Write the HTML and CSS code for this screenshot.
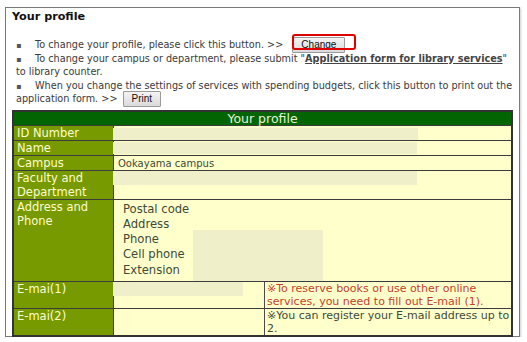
FILE: index.html
```html
<!DOCTYPE html>
<html lang="en">
<head>
    <meta charset="UTF-8">
    <title>Your profile</title>
    <link rel="stylesheet" href="styles.css">
</head>
<body>
    <div class="frame">
        <div class="title">Your profile</div>

        <!-- Notes above the table -->
        <div class="notes">
            <p><span class="bullet">▪</span>To change your profile, please click this button. &gt;&gt; <span class="change-wrap"><button class="btn">Change</button></span></p>
            <p><span class="bullet">▪</span>To change your campus or department, please submit "<a href="#" class="form-link">Application form for library services</a>" to library counter.</p>
            <p><span class="bullet">▪</span>When you change the settings of services with spending budgets, click this button to print out the application form. &gt;&gt; <button class="btn print">Print</button></p>
        </div>

        <!-- Profile table -->
        <div class="profile-wrap">
            <table class="profile">
                <colgroup>
                    <col class="c-label">
                    <col class="c-value">
                    <col class="c-note">
                </colgroup>
                <tr class="r-head"><th colspan="3">Your profile</th></tr>
                <tr class="r-id"><td class="label">ID Number</td><td class="value" colspan="2"></td></tr>
                <tr class="r-name"><td class="label">Name</td><td class="value" colspan="2"></td></tr>
                <tr class="r-campus"><td class="label">Campus</td><td class="value campus" colspan="2">Ookayama campus</td></tr>
                <tr class="r-faculty"><td class="label">Faculty and<br>Department</td><td class="value" colspan="2"></td></tr>
                <tr class="r-address">
                    <td class="label">Address and<br>Phone</td>
                    <td class="value" colspan="2">
                        <ul class="addr-list">
                            <li>Postal code</li>
                            <li>Address</li>
                            <li>Phone</li>
                            <li>Cell phone</li>
                            <li>Extension</li>
                        </ul>
                    </td>
                </tr>
                <tr class="r-mail1"><td class="label">E-mai(1)</td><td class="value mail"></td><td class="note warn">※To reserve books or use other online services, you need to fill out E-mail (1).</td></tr>
                <tr class="r-mail2"><td class="label">E-mai(2)</td><td class="value mail"></td><td class="note">※You can register your E-mail address up to 2.</td></tr>
            </table>

            <!-- hidden personal data -->
            <div class="mask m-id"></div>
            <div class="mask m-name"></div>
            <div class="mask m-faculty"></div>
            <div class="mask m-address"></div>
            <div class="mask m-mail"></div>
        </div>
    </div>
</body>
</html>
```

FILE: styles.css
```css
body {
    margin: 0;
    background: #ffffff;
    font-family: "DejaVu Sans", Verdana, sans-serif;
    color: #333333;
}

.frame {
    margin: 7px 0 0 5px;
    width: 501px;
    height: 328px;
    padding: 0 6px;
    border: 1px solid #7a7a7a;
    box-shadow: 1px 1px 2px #d0d0d0;
}

.title {
    margin-top: 2px;
    font-size: 11.2px;
    font-weight: bold;
    line-height: 14px;
    color: #111111;
}

.notes {
    margin-top: 14px;
    padding-left: 4px;
    font-size: 9.7px;
    line-height: 13.5px;
    color: #3a3a3a;
}

.notes p {
    margin: 0;
    height: auto;
}

.bullet {
    display: inline-block;
    width: 19px;
    font-size: 8px;
    line-height: 10px;
    color: #555555;
}

.form-link {
    color: #444444;
    font-weight: bold;
}

.btn {
    display: inline-block;
    height: 16px;
    margin: -3px 0 -2px 6px;
    padding: 0 8px;
    font-family: "Liberation Sans", Arial, sans-serif;
    font-size: 10px;
    line-height: 13px;
    color: #111111;
    background: linear-gradient(#f4f4f4, #dadada);
    border: 1px solid #9a9a9a;
    border-radius: 1px;
    vertical-align: middle;
}

.btn.print {
    margin-left: 2px;
}

.change-wrap {
    position: relative;
}

/* red highlight round the Change button */
.change-wrap::after {
    content: "";
    position: absolute;
    left: 6px;
    top: -5px;
    width: 64px;
    height: 16px;
    box-sizing: border-box;
    border: 2px solid #e00000;
    border-radius: 3px;
}

.profile-wrap {
    position: relative;
    margin-top: 4.5px;
}

.profile {
    width: 501px;
    border: 2px solid #333333;
    border-spacing: 0;
    table-layout: fixed;
}

.c-label { width: 100px; }
.c-value { width: 150px; }
.c-note { width: 247px; }

.profile th,
.profile td {
    box-sizing: border-box;
    padding: 0;
    border-bottom: 1px solid #3c3c3c;
    vertical-align: top;
}

.profile th {
    height: 14px;
    background: #036403;
    color: #e8f4d6;
    font-size: 12.5px;
    font-weight: normal;
    line-height: 13px;
    text-align: center;
}

.profile tr:last-child td {
    border-bottom: none;
}

.label {
    padding-left: 3px !important;
    background: #789a01;
    color: #fffcd0;
    border-right: 1px solid #3c3c3c;
    font-size: 11.5px;
    line-height: 14px;
}

.value {
    background: #ffffcc;
    color: #3d4a38;
}

.r-id td, .r-name td { height: 15px; vertical-align: middle; }
.r-campus td { height: 14px; vertical-align: middle; }
.r-faculty td { height: 29px; }
.r-address td { height: 82px; }
.r-mail1 td { height: 25px; }
.r-mail2 td { height: 25px; }

.campus {
    padding-left: 4px !important;
    font-size: 10px;
    line-height: 13px;
}

.addr-list {
    margin: 0;
    padding: 1.5px 0 0 9px;
    list-style: none;
    font-size: 11.6px;
    line-height: 15.3px;
}

.note {
    padding-left: 2px !important;
    background: #ffffcc;
    border-left: 1px solid #4a4a4a;
    font-size: 11px;
    line-height: 13px;
    color: #3d4a38;
}

.note.warn {
    color: #c4412c;
}

.mask {
    position: absolute;
    background: #eff0c9;
}

.m-id { left: 101px; top: 18px; width: 305px; height: 12px; }
.m-name { left: 101px; top: 32px; width: 304px; height: 12px; }
.m-faculty { left: 101px; top: 61px; width: 304px; height: 14px; }
.m-address { left: 181px; top: 120px; width: 130px; height: 51px; }
.m-mail { left: 101px; top: 172px; width: 130px; height: 14px; }
```
